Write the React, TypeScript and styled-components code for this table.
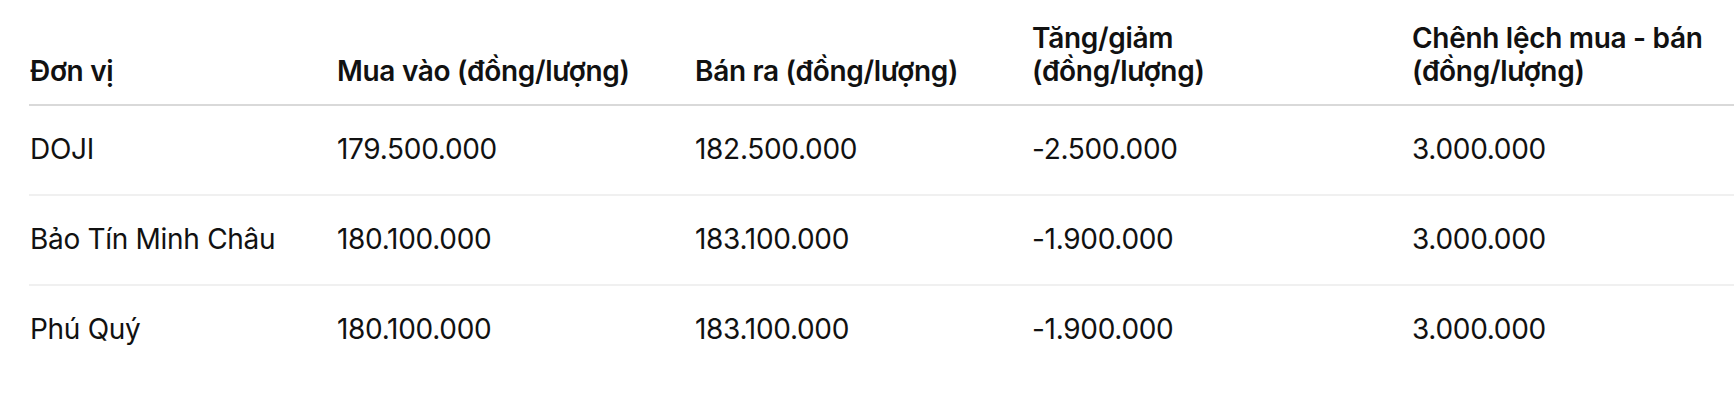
import styled, { createGlobalStyle } from "styled-components";

const GlobalStyle = createGlobalStyle`
    html, body {
        margin: 0;
        padding: 0;
        background: #ffffff;
    }
    body {
        font-family: Inter, "Noto Sans", "Liberation Sans", sans-serif;
        color: #111111;
    }
`;

type Row = {
    unit: string;
    buy: string;
    sell: string;
    change: string;
    spread: string;
};

const rows: Row[] = [
    {unit: "DOJI", buy: "179.500.000", sell: "182.500.000", change: "-2.500.000", spread: "3.000.000"},
    {unit: "Bảo Tín Minh Châu", buy: "180.100.000", sell: "183.100.000", change: "-1.900.000", spread: "3.000.000"},
    {unit: "Phú Quý", buy: "180.100.000", sell: "183.100.000", change: "-1.900.000", spread: "3.000.000"},
];

const columns = [307, 358, 337, 380];

export default function App() {
    return (
        <>
            <GlobalStyle/>
            <Page>
                <Table>
                    <colgroup>
                        {columns.map((w, i) => <col key={i} style={{width: w}}/>)}
                        <col/>
                    </colgroup>
                    <thead>
                        <tr>
                            <Th>Đơn vị</Th>
                            <Th>Mua vào (đồng/lượng)</Th>
                            <Th>Bán ra (đồng/lượng)</Th>
                            <Th>Tăng/giảm<br/>(đồng/lượng)</Th>
                            <Th>Chênh lệch mua - bán<br/>(đồng/lượng)</Th>
                        </tr>
                    </thead>
                    <tbody>
                        {rows.map((r) => (
                            <BodyRow key={r.unit}>
                                <Td>{r.unit}</Td>
                                <Td>{r.buy}</Td>
                                <Td>{r.sell}</Td>
                                <Td>{r.change}</Td>
                                <Td>{r.spread}</Td>
                            </BodyRow>
                        ))}
                    </tbody>
                </Table>
            </Page>
        </>
    );
}

const Page = styled.div`
    padding-left: 29px;
    overflow: hidden;
`;

const Table = styled.table`
    width: 1705px;
    table-layout: fixed;
    border-collapse: collapse;
    font-size: 28px;
    line-height: 33px;
    letter-spacing: -0.3px;
`;

const Th = styled.th`
    text-align: left;
    vertical-align: bottom;
    font-weight: 600;
    padding: 22px 0 16px 1px;
    border-bottom: 2px solid #d9d9d9;
    color: #111111;
`;

const BodyRow = styled.tr`
    border-bottom: 2px solid #f0f0f0;

    &:last-child {
        border-bottom: none;
    }
`;

const Td = styled.td`
    font-weight: 400;
    padding: 27px 0 28px 1px;
    vertical-align: middle;
    white-space: nowrap;
    color: #111111;
`;
